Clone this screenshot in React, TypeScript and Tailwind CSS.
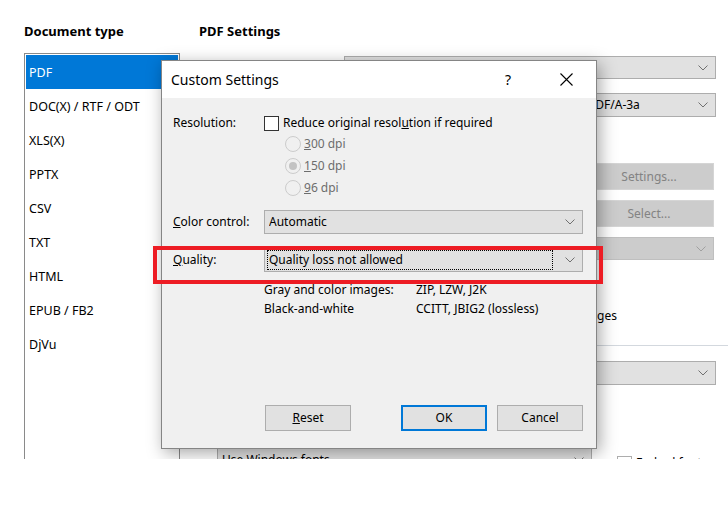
import type { ReactNode } from "react";

const font = { fontFamily: '"Noto Sans", "Open Sans", sans-serif' };

const Chevron = ({ color = "#606060" }: { color?: string }) => (
  <svg width="10" height="6" viewBox="0 0 10 6" fill="none">
    <path d="M0.5 0.5 L5 5 L9.5 0.5" stroke={color} strokeWidth="1" />
  </svg>
);

const docTypes = ["PDF", "DOC(X) / RTF / ODT", "XLS(X)", "PPTX", "CSV", "TXT", "HTML", "EPUB / FB2", "DjVu"];

const Combo = ({ children, className = "", disabled = false }: { children?: ReactNode; className?: string; disabled?: boolean }) => (
  <div
    className={`flex items-center justify-between border ${
      disabled ? "border-[#bfbfbf] bg-[#cccccc]" : "border-[#adadad] bg-[#e1e1e1]"
    } pr-[7px] ${className}`}
  >
    <div className="flex-1 min-w-0 truncate">{children}</div>
    <Chevron color={disabled ? "#a0a0a0" : "#707070"} />
  </div>
);

const Radio = ({ checked, children }: { checked?: boolean; children: ReactNode }) => (
  <div className="flex h-[22px] items-center pl-[21px]">
    <div className="flex h-[16px] w-[16px] items-center justify-center rounded-full border border-[#cccccc] bg-[#f0f0f0]">
      {checked && <div className="h-[8px] w-[8px] rounded-full bg-[#c3c3c3]" />}
    </div>
    <span className="ml-[3px] text-[#6d6d6d]">{children}</span>
  </div>
);

const Button = ({ children, primary = false }: { children: ReactNode; primary?: boolean }) => (
  <div
    className={`flex h-[26px] w-[86px] items-center justify-center bg-[#e1e1e1] ${
      primary ? "border-2 border-[#0078d7]" : "border border-[#adadad]"
    }`}
  >
    {children}
  </div>
);

function CustomSettings() {
  return (
    <div className="absolute left-[161px] top-[60px] flex h-[389px] w-[436px] flex-col border border-[#858585] bg-[#f0f0f0] text-[12px] text-black shadow-[3px_4px_16px_rgba(0,0,0,0.35)]">
      <div className="flex h-[37px] items-center bg-white pl-[9px]">
        <span className="text-[14px]">Custom Settings</span>
        <span className="ml-auto text-[14px]">?</span>
        <svg className="ml-[49px] mr-[23px]" width="13" height="13" viewBox="0 0 13 13">
          <path d="M0.5 0.5 L12.5 12.5 M12.5 0.5 L0.5 12.5" stroke="#000" strokeWidth="1.1" />
        </svg>
      </div>

      <div className="flex flex-col pl-[11px] pt-[17px]">
        <div className="flex">
          <div className="w-[91px] leading-[16px]">Resolution:</div>
          <div className="flex flex-col">
            <div className="flex h-[16px] items-center">
              <div className="h-[15px] w-[15px] border border-[#333333] bg-white" />
              <span className="ml-[4px]">
                Reduce original resol<span className="underline">u</span>tion if required
              </span>
            </div>
            <div className="mt-[2px] flex flex-col">
              <Radio>
                <span className="underline">3</span>00 dpi
              </Radio>
              <Radio checked>
                <span className="underline">1</span>50 dpi
              </Radio>
              <Radio>
                <span className="underline">9</span>6 dpi
              </Radio>
            </div>
          </div>
        </div>

        <div className="mt-[11px] flex items-center">
          <div className="w-[91px]">
            <span className="underline">C</span>olor control:
          </div>
          <Combo className="h-[24px] w-[319px] pl-[4px]">Automatic</Combo>
        </div>

        <div className="mt-[14px] flex items-center">
          <div className="w-[91px]">
            <span className="underline">Q</span>uality:
          </div>
          <Combo className="h-[24px] w-[319px] pl-[2px]">
            <div className="mr-[12px] h-[20px] border border-dotted border-black pl-[1px] leading-[18px]">
              Quality loss not allowed
            </div>
          </Combo>
        </div>

        <div className="ml-[91px] mt-[8px] grid grid-cols-[152px_1fr] leading-[19px]">
          <span>Gray and color images:</span>
          <span>ZIP, LZW, J2K</span>
          <span>Black-and-white</span>
          <span>CCITT, JBIG2 (lossless)</span>
        </div>

        <div className="ml-[92px] mt-[87px] flex">
          <Button>
            <span className="underline">R</span>eset
          </Button>
          <div className="ml-[50px]">
            <Button primary>OK</Button>
          </div>
          <div className="ml-[10px]">
            <Button>Cancel</Button>
          </div>
        </div>
      </div>

      <div className="pointer-events-none absolute left-[-9px] top-[185px] h-[38px] w-[450px] border-[4px] border-[#ed1c24]" />
    </div>
  );
}

export default function App() {
  return (
    <div className="h-[517px] w-[728px] bg-white" style={font}>
      <div className="relative h-[459px] overflow-hidden text-[12px] text-black">
        <div className="flex pl-[24px] pt-[22px]">
          <div className="flex w-[156px] flex-col">
            <div className="h-[18px] text-[13px] font-bold leading-[18px]">Document type</div>
            <div className="mt-[13px] h-[460px] border border-[#8a8a8a] p-[1px]">
              {docTypes.map((t, i) => (
                <div
                  key={t}
                  className={`flex h-[34px] items-center pl-[3px] pt-[3px] text-[12.5px] ${
                    i === 0 ? "bg-[#0078d7] text-white" : ""
                  }`}
                >
                  {t}
                </div>
              ))}
            </div>
          </div>

          <div className="ml-[19px] flex flex-1 flex-col">
            <div className="h-[18px] text-[13px] font-bold leading-[18px]">PDF Settings</div>
            <Combo className="ml-[145px] mt-[16px] h-[23px] w-[372px]" />
            <Combo className="ml-[145px] mt-[14px] h-[24px] w-[372px] pl-[243px]">PDF/A-3a</Combo>
            <div className="ml-[385px] mt-[46px] flex h-[27px] w-[130px] items-center justify-center border border-[#d5d5d5] bg-[#cccccc] text-[#838383]">
              Settings...
            </div>
            <div className="ml-[385px] mt-[10px] flex h-[27px] w-[130px] items-center justify-center border border-[#d5d5d5] bg-[#cccccc] text-[#838383]">
              Select...
            </div>
            <Combo disabled className="ml-[145px] mt-[10px] h-[23px] w-[370px]" />
            <div className="mt-[47px] flex h-[18px] items-center">
              <div className="w-[418px] text-right">images</div>
            </div>
            <div className="mt-[20px] h-px bg-[#d3d8de]" />
            <Combo className="ml-[145px] mt-[15px] h-[24px] w-[372px]" />
            <div className="mt-[63px] flex items-start">
              <Combo className="ml-[18px] h-[24px] w-[375px] pl-[4px]">Use Windows fonts</Combo>
              <div className="ml-[25px] mt-[6px] flex items-center">
                <div className="h-[15px] w-[15px] border border-[#adadad] bg-white" />
                <span className="ml-[4px]">Embed fonts</span>
              </div>
            </div>
          </div>
        </div>

        <CustomSettings />
      </div>
    </div>
  );
}
